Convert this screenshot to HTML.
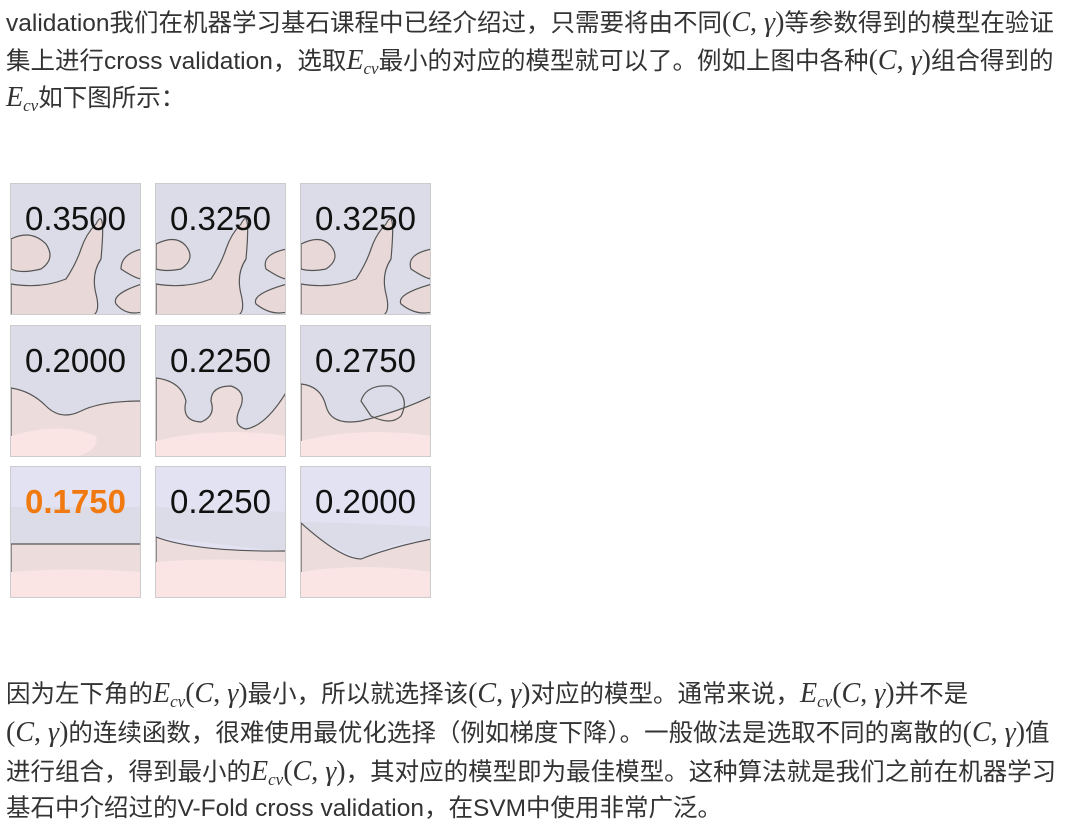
<!DOCTYPE html>
<html><head><meta charset="utf-8"><style>
html,body{margin:0;padding:0;background:#fff;width:1080px;height:840px;overflow:hidden;position:relative}
.l{position:absolute;left:6px;white-space:nowrap;font:24.5px/30px "Liberation Sans","Noto Sans CJK SC",sans-serif;color:#333}
.m{font-family:"Liberation Serif","DejaVu Serif",serif;font-size:28px}
.i{font-style:italic}
sub{font-size:17px;font-style:italic;font-family:"Liberation Serif",serif;vertical-align:-5px;line-height:0}
.p{position:absolute;width:131px;height:132px;overflow:hidden;border:1px solid #ccc;box-sizing:border-box}
.p .n{position:absolute;left:-10px;right:-10px;top:16px;text-align:center;font:33px "Liberation Sans",sans-serif;color:#111}
</style></head><body>
<div class="l" style="top:8px">validation我们在机器学习基石课程中已经介绍过，只需要将由不同<span class="m">(<span class="i">C</span>, <span class="i">γ</span>)</span>等参数得到的模型在验证</div>
<div class="l" style="top:46px">集上进行cross validation，选取<span class="m i">E</span><sub>cv</sub>最小的对应的模型就可以了。例如上图中各种<span class="m">(<span class="i">C</span>, <span class="i">γ</span>)</span>组合得到的</div>
<div class="l" style="top:83px"><span class="m i">E</span><sub>cv</sub>如下图所示：</div>

<div class="p" style="left:10px;top:183px;background:#dcdce8"><svg width="131" height="132"><path d="M0 55 Q20 45 35 60 Q45 75 30 85 Q10 90 0 85Z M0 100 Q30 105 55 95 Q65 80 70 65 Q75 50 85 40 Q95 20 90 75 Q80 90 85 110 Q90 130 80 132 L0 132Z M131 65 Q110 70 110 85 Q125 95 131 95Z M131 100 Q100 110 105 120 Q115 132 131 128Z" fill="#e8d8d8" stroke="#555" stroke-width="1.2"/></svg><div class="n">0.3500</div></div>
<div class="p" style="left:155px;top:183px;background:#dcdce8"><svg width="131" height="132"><path d="M0 60 Q20 50 30 62 Q40 75 25 85 Q10 88 0 85Z M0 100 Q30 105 55 95 Q65 80 70 65 Q75 50 85 40 Q95 20 90 75 Q80 90 85 110 Q90 130 80 132 L0 132Z M131 65 Q105 70 110 85 Q125 95 131 95Z M131 100 Q95 110 100 120 Q115 132 131 128Z" fill="#e8d8d8" stroke="#555" stroke-width="1.2"/></svg><div class="n">0.3250</div></div>
<div class="p" style="left:300px;top:183px;background:#dcdce8"><svg width="131" height="132"><path d="M0 60 Q20 50 30 62 Q40 75 25 85 Q10 88 0 85Z M0 100 Q30 105 55 95 Q65 80 70 65 Q75 50 85 40 Q95 20 90 75 Q80 90 85 110 Q90 130 80 132 L0 132Z M131 65 Q105 70 110 85 Q125 95 131 95Z M131 100 Q95 110 100 120 Q115 132 131 128Z" fill="#e8d8d8" stroke="#555" stroke-width="1.2"/></svg><div class="n">0.3250</div></div>

<div class="p" style="left:10px;top:325px;background:#dcdce8"><svg width="131" height="132"><path d="M0 62 Q20 65 35 80 Q50 95 70 85 Q90 75 131 75 L131 132 L0 132Z" fill="#ecdcdc" stroke="#555" stroke-width="1.2"/><path d="M0 110 Q50 95 85 110 Q90 125 60 132 L0 132Z" fill="#fae4e4"/></svg><div class="n">0.2000</div></div>
<div class="p" style="left:155px;top:325px;background:#dcdce8"><svg width="131" height="132"><path d="M0 52 Q25 55 30 75 Q25 95 45 96 Q60 90 55 75 Q55 60 75 60 Q90 65 85 80 Q75 100 90 103 Q110 100 131 65 L131 132 L0 132Z" fill="#ecdcdc" stroke="#555" stroke-width="1.2"/><path d="M0 115 Q60 100 131 110 L131 132 L0 132Z" fill="#fae4e4"/></svg><div class="n">0.2250</div></div>
<div class="p" style="left:300px;top:325px;background:#dcdce8"><svg width="131" height="132"><path d="M0 58 Q20 60 25 80 Q30 100 60 95 Q100 85 131 70 L131 132 L0 132Z" fill="#ecdcdc" stroke="#555" stroke-width="1.2"/><path d="M60 75 Q65 58 90 60 Q110 70 100 90 Q90 100 70 90Z" fill="none" stroke="#555" stroke-width="1.2"/><path d="M0 115 Q60 100 131 110 L131 132 L0 132Z" fill="#fae4e4"/></svg><div class="n">0.2750</div></div>

<div class="p" style="left:10px;top:466px;background:#e2e2f2"><svg width="131" height="132"><path d="M0 40 L131 40 L131 77 L0 77Z" fill="#dcdce8"/><path d="M0 77 L131 77 L131 132 L0 132Z" fill="#ecdcdc" stroke="#555" stroke-width="1.2"/><path d="M0 105 Q60 100 131 105 L131 132 L0 132Z" fill="#fae4e4"/></svg><div class="n" style="color:#f07a10;font-weight:bold">0.1750</div></div>
<div class="p" style="left:155px;top:466px;background:#e2e2f2"><svg width="131" height="132"><path d="M0 40 L131 45 L131 85 L0 70Z" fill="#dcdce8"/><path d="M0 70 Q40 85 131 84 L131 132 L0 132Z" fill="#ecdcdc" stroke="#555" stroke-width="1.2"/><path d="M0 95 Q60 90 131 95 L131 132 L0 132Z" fill="#fae4e4"/></svg><div class="n">0.2250</div></div>
<div class="p" style="left:300px;top:466px;background:#e2e2f2"><svg width="131" height="132"><path d="M0 55 Q40 55 131 60 L131 72 Q90 75 60 92 Q30 80 0 60Z" fill="#dcdce8"/><path d="M0 56 Q40 92 60 92 Q90 80 131 72 L131 132 L0 132Z" fill="#ecdcdc" stroke="#555" stroke-width="1.2"/><path d="M0 105 Q60 95 131 105 L131 132 L0 132Z" fill="#fae4e4"/></svg><div class="n">0.2000</div></div>

<div class="l" style="top:679px">因为左下角的<span class="m i">E</span><sub>cv</sub><span class="m">(<span class="i">C</span>, <span class="i">γ</span>)</span>最小，所以就选择该<span class="m">(<span class="i">C</span>, <span class="i">γ</span>)</span>对应的模型。通常来说，<span class="m i">E</span><sub>cv</sub><span class="m">(<span class="i">C</span>, <span class="i">γ</span>)</span>并不是</div>
<div class="l" style="top:718px"><span class="m">(<span class="i">C</span>, <span class="i">γ</span>)</span>的连续函数，很难使用最优化选择（例如梯度下降）。一般做法是选取不同的离散的<span class="m">(<span class="i">C</span>, <span class="i">γ</span>)</span>值</div>
<div class="l" style="top:757px">进行组合，得到最小的<span class="m i">E</span><sub>cv</sub><span class="m">(<span class="i">C</span>, <span class="i">γ</span>)</span>，其对应的模型即为最佳模型。这种算法就是我们之前在机器学习</div>
<div class="l" style="top:794px">基石中介绍过的V-Fold cross validation，在SVM中使用非常广泛。</div>
</body></html>
